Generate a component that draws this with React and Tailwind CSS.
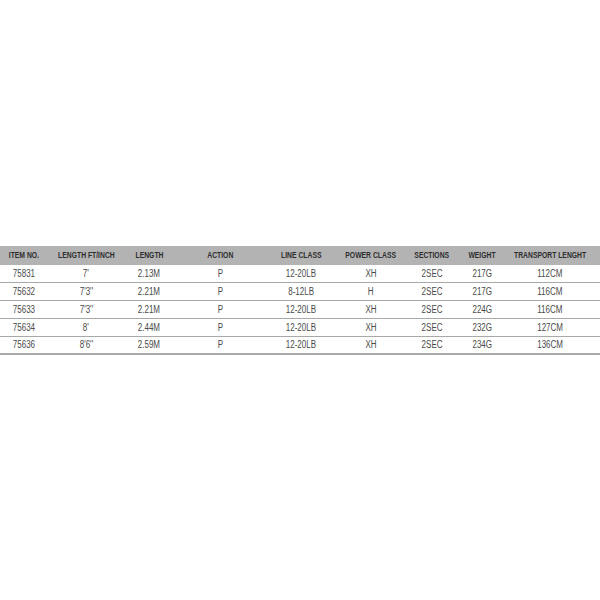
const columns = [
  { label: 'ITEM NO.', key: 'item' },
  { label: 'LENGTH FT/INCH', key: 'ft' },
  { label: 'LENGTH', key: 'len' },
  { label: 'ACTION', key: 'action' },
  { label: 'LINE CLASS', key: 'line' },
  { label: 'POWER CLASS', key: 'power' },
  { label: 'SECTIONS', key: 'sec' },
  { label: 'WEIGHT', key: 'weight' },
  { label: 'TRANSPORT LENGHT', key: 'transport' },
];

const rows = [
  { item: '75831', ft: "7'", len: '2.13M', action: 'P', line: '12-20LB', power: 'XH', sec: '2SEC', weight: '217G', transport: '112CM' },
  { item: '75632', ft: "7'3''", len: '2.21M', action: 'P', line: '8-12LB', power: 'H', sec: '2SEC', weight: '217G', transport: '116CM' },
  { item: '75633', ft: "7'3''", len: '2.21M', action: 'P', line: '12-20LB', power: 'XH', sec: '2SEC', weight: '224G', transport: '116CM' },
  { item: '75634', ft: "8'", len: '2.44M', action: 'P', line: '12-20LB', power: 'XH', sec: '2SEC', weight: '232G', transport: '127CM' },
  { item: '75636', ft: "8'6''", len: '2.59M', action: 'P', line: '12-20LB', power: 'XH', sec: '2SEC', weight: '234G', transport: '136CM' },
];

const grid = 'grid grid-cols-[48px_76px_50px_92px_70px_70px_52px_48px_88px]';

export default function App() {
  return (
    <div
      className="h-[600px] w-[600px] bg-white flex flex-col justify-center text-[#4a4a4a]"
      style={{ fontFamily: '"Liberation Sans", Arial, sans-serif' }}
    >
      <div className="w-full">
        {/* header band */}
        <div className={`${grid} h-[19px] items-center bg-[#b3b3b3] text-[8.5px] font-bold text-[#2e2e2e]`}>
          {columns.map(c => (
            <div key={c.key} className="flex justify-center whitespace-nowrap">
              <span className="inline-block scale-x-[0.8]">{c.label}</span>
            </div>
          ))}
        </div>

        {rows.map((r, i) => (
          <div
            key={i}
            className={`${grid} h-[18px] items-center text-[10px] ${i === rows.length - 1 ? 'border-b-2 border-[#a8a8a8]' : 'border-b border-[#a8a8a8]'}`}
          >
            {columns.map(c => (
              <div key={c.key} className="flex justify-center whitespace-nowrap">
                <span className="inline-block scale-x-[0.8]">{r[c.key]}</span>
              </div>
            ))}
          </div>
        ))}
      </div>
    </div>
  );
}
